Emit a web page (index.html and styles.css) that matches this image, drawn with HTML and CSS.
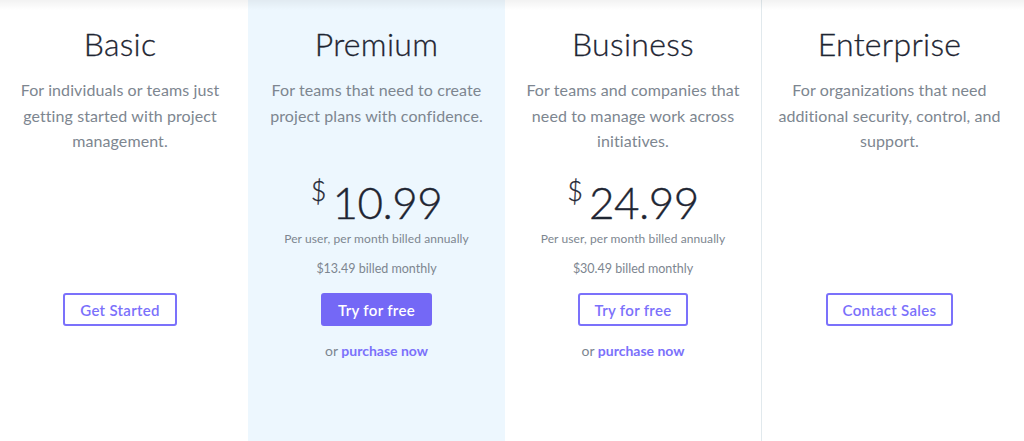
FILE: index.html
```html
<!DOCTYPE html>
<html lang="en">
<head>
<meta charset="utf-8">
<title>Pricing</title>
<link rel="stylesheet" href="styles.css">
</head>
<body>
<div class="pricing">
  <section class="plan">
    <h2 class="plan-title">Basic</h2>
    <p class="plan-desc">For individuals or teams just getting started with project management.</p>
    <div class="plan-price"></div>
    <a class="btn btn-outline" href="#">Get Started</a>
  </section>
  <section class="plan plan-featured">
    <h2 class="plan-title">Premium</h2>
    <p class="plan-desc">For teams that need to create project plans with confidence.</p>
    <div class="plan-price">
      <div class="price"><span class="currency">$</span><span class="amount">10.99</span></div>
      <div class="price-note">Per user, per month billed annually</div>
      <div class="price-monthly">$13.49 billed monthly</div>
    </div>
    <a class="btn btn-solid" href="#">Try for free</a>
    <p class="alt">or <a href="#">purchase now</a></p>
  </section>
  <section class="plan">
    <h2 class="plan-title">Business</h2>
    <p class="plan-desc">For teams and companies that need to manage work across initiatives.</p>
    <div class="plan-price">
      <div class="price"><span class="currency">$</span><span class="amount">24.99</span></div>
      <div class="price-note">Per user, per month billed annually</div>
      <div class="price-monthly">$30.49 billed monthly</div>
    </div>
    <a class="btn btn-outline" href="#">Try for free</a>
    <p class="alt">or <a href="#">purchase now</a></p>
  </section>
  <section class="plan plan-bordered">
    <h2 class="plan-title">Enterprise</h2>
    <p class="plan-desc">For organizations that need additional security, control, and support.</p>
    <div class="plan-price"></div>
    <a class="btn btn-outline" href="#">Contact Sales</a>
  </section>
</div>
</body>
</html>
```

FILE: styles.css
```css
* { box-sizing: border-box; }

html, body {
  margin: 0;
  padding: 0;
  background: #ffffff;
  overflow: hidden;
}

body {
  font-family: Lato, "Open Sans", "Liberation Sans", sans-serif;
  color: #1e2532;
}

.pricing {
  position: relative;
  display: grid;
  grid-template-columns: 256px 257px 256px 256px;
  margin-left: -8px;
  height: 441px;
}

.pricing::before {
  content: "";
  position: absolute;
  left: 0;
  right: -20px;
  top: 0;
  height: 10px;
  background: linear-gradient(to bottom, rgba(0,0,0,0.05), rgba(0,0,0,0));
  pointer-events: none;
}

.plan {
  display: flex;
  flex-direction: column;
  align-items: center;
  text-align: center;
  padding: 24px 14px 0;
}

.plan-featured {
  background: #edf7fe;
}

.plan-bordered {
  border-left: 1px solid #e1e9ed;
}

.plan-title {
  margin: 0;
  font-size: 32px;
  line-height: 40px;
  font-weight: 300;
  letter-spacing: 0.3px;
  color: #1e2532;
  -webkit-text-stroke: 0.3px #1e2532;
}

.plan-desc {
  margin: 13px 0 0;
  height: 77px;
  font-size: 16px;
  line-height: 25.5px;
  letter-spacing: 0.1px;
  color: #7d8690;
}

.plan-price {
  height: 139px;
  padding-top: 23px;
  display: flex;
  flex-direction: column;
  align-items: center;
}

.price {
  display: flex;
  align-items: flex-start;
  height: 50px;
  color: #1e2532;
}

.currency {
  font-size: 27px;
  line-height: 27px;
  font-weight: 300;
  margin-top: 0;
  margin-right: 6px;
  -webkit-text-stroke: 0.3px #1e2532;
}

.amount {
  font-size: 44px;
  line-height: 50px;
  font-weight: 300;
  letter-spacing: -0.5px;
  -webkit-text-stroke: 0.4px #1e2532;
}

.price-note {
  margin-top: 3px;
  font-size: 12px;
  line-height: 18px;
  letter-spacing: 0.1px;
  color: #7d8690;
}

.price-monthly {
  margin-top: 12px;
  font-size: 12.5px;
  line-height: 18px;
  color: #7d8690;
}

.btn {
  display: inline-flex;
  align-items: center;
  justify-content: center;
  height: 33px;
  padding: 0 15px;
  border-radius: 3px;
  font-size: 15px;
  font-weight: 600;
  text-decoration: none;
  letter-spacing: 0.3px;
}

.btn-outline {
  border: 2px solid #7b71fb;
  color: #7b71fb;
  background: #ffffff;
}

.btn-solid {
  border: 2px solid #7468f6;
  background: #7468f6;
  color: #ffffff;
}

.alt {
  margin: 16px 0 0;
  font-size: 14px;
  line-height: 18px;
  color: #7d8690;
}

.alt a {
  color: #7b71fb;
  font-weight: 700;
  text-decoration: none;
}
```
